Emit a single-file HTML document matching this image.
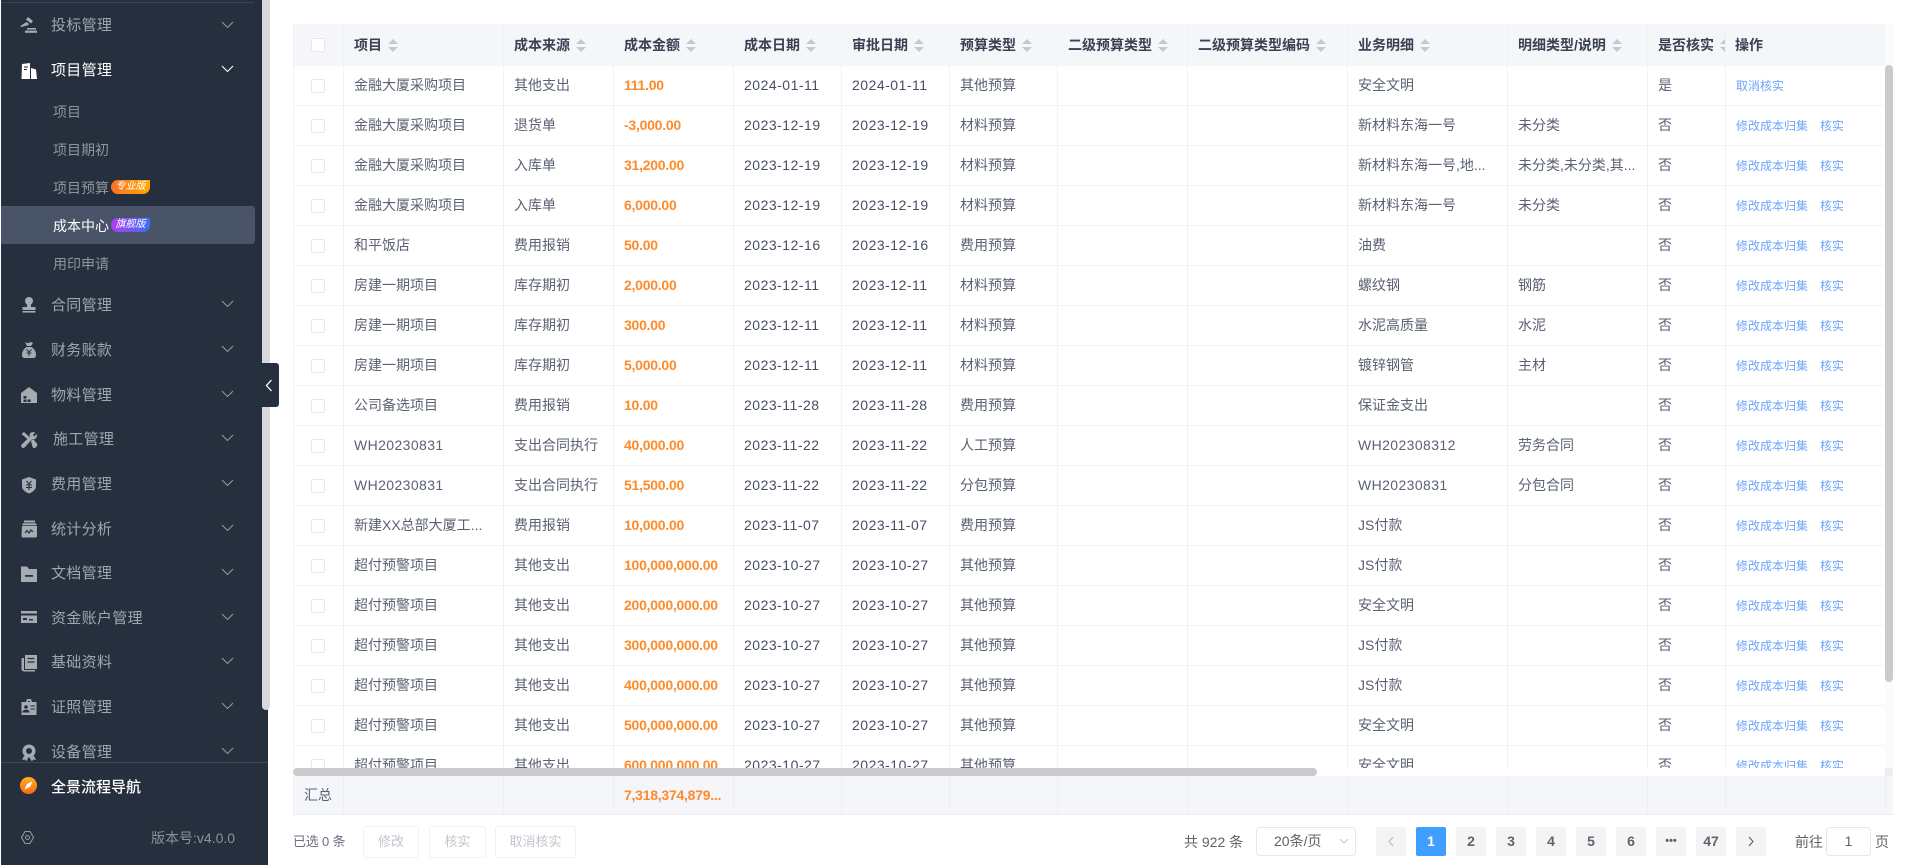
<!DOCTYPE html>
<html lang="zh-CN">
<head>
<meta charset="utf-8">
<title>成本中心</title>
<style>
*{box-sizing:border-box}
html,body{margin:0;padding:0;width:1917px;height:865px;overflow:hidden;background:#fff}
body{position:relative;font-family:"Liberation Sans","Noto Sans CJK SC",sans-serif;font-size:14px;color:#5a6172;filter:blur(.3px)}
.a{position:absolute;white-space:nowrap}
#side{position:absolute;left:1px;top:0;width:267px;height:865px;background:#262f3e}
.sb{position:absolute;left:261px;top:0;width:8px;height:710px;background:#d7d9dc;border-radius:0 0 4px 4px}
.m{position:absolute;left:50px;height:24px;line-height:24px;font-size:15px;letter-spacing:.3px;color:#a0a6ad;white-space:nowrap;margin-top:1px}
.s{position:absolute;left:52px;height:22px;line-height:22px;font-size:14px;color:#8f959e;white-space:nowrap}
.ic{position:absolute;left:19px;width:18px;height:18px;fill:#a5abb0;margin-top:1px}
.ch{position:absolute;left:220px;width:13px;height:8px;fill:none;stroke:#8f959c;stroke-width:1.1}
.bd{position:absolute;left:110px;width:39px;height:14px;line-height:14px;text-align:center;color:#fff;font-size:10px;font-style:italic;border-radius:7px 0 7px 7px}
#t{position:absolute;left:293px;top:24px;width:1592px;height:752px;overflow:hidden}
table{border-collapse:collapse;table-layout:fixed;width:1592px;position:absolute;left:0;top:0}
th,td{height:40px;padding:0 0 0 10px;border-right:1px solid #f1f2f6;border-bottom:1px solid #f2f3f7;text-align:left;white-space:nowrap;overflow:hidden;font-weight:400}
td:first-child,th:first-child{padding:0 2px 0 0;text-align:center;border-left:1px solid #f1f2f6}
th{height:41px;background:#f4f6fa;color:#3a4152;font-weight:700;font-size:14px;padding-top:2px}
td:nth-child(4){color:#ff8a2a;font-weight:700;letter-spacing:-.25px}
td:nth-child(5),td:nth-child(6){color:#464e63;letter-spacing:.5px}
td:nth-child(13){padding-left:10px;font-size:12px;color:#6ea5fb}
th:nth-child(13){padding-left:9px}
.l{letter-spacing:.4px}
td a{margin-right:12px}
.c{display:inline-block;width:14px;height:14px;border:1px solid #e6e8ec;border-radius:2px;background:#fff;vertical-align:middle}
.o{display:inline-block;position:relative;width:10px;height:13px;margin-left:6px;vertical-align:-2px}
.o:before,.o:after{content:"";position:absolute;left:0;border-left:5px solid transparent;border-right:5px solid transparent}
.o:before{top:0;border-bottom:5px solid #c4c8d0}
.o:after{bottom:0;border-top:5px solid #c4c8d0}
#f{position:absolute;left:293px;top:776px;width:1600px;height:39px;background:#f4f6fa;border-bottom:1px solid #eceef3;overflow:hidden}
#f table td{background:#f4f6fa;height:38px;border-bottom:0;border-right:1px solid #edeff4}
#f td:first-child{text-align:left;padding-left:10px}
.b{position:absolute;top:826px;height:32px;line-height:30px;text-align:center;border:1px solid #f1f2f5;border-radius:3px;color:#c2c5cc;font-size:13px}
.p{position:absolute;top:827px;width:30px;height:29px;line-height:29px;text-align:center;background:#f4f4f5;border-radius:2px;color:#5f6470;font-weight:700;font-size:14px}
.p.on{background:#409eff;color:#fff}
</style>
</head>
<body>
<div id="side">
  <div class="a" style="left:0;top:2px;width:253px;height:1px;background:#3a4454"></div>
  <div class="sb"></div>

  <svg class="ic" style="top:15px" viewBox="0 0 18 18"><path d="M8 1l5 4-2 2.500-5-4zM6.500 6l2.500 2-1 1.200-7 1.800-.6-1z"/><rect x="7" y="12" width="9" height="1.600"/><rect x="5" y="14.600" width="12" height="2.200"/></svg>
  <div class="m" style="top:13px">投标管理</div>
  <svg class="ch" style="top:21px" viewBox="0 0 13 8"><path d="M1 1l5.500 5.500L12 1"/></svg>

  <svg class="ic" style="top:61px;fill:#fff" viewBox="0 0 18 18"><path d="M2 2l8-1v16H1.500zM11 6l5 1.500 1 9.500h-6z"/><path d="M4 5h4M4 7.500h3" stroke="#262f3e" stroke-width="1" fill="none"/></svg>
  <div class="m" style="top:58px;color:#fff">项目管理</div>
  <svg class="ch" style="top:65px;stroke:#fff" viewBox="0 0 13 8"><path d="M1 1l5.500 5.500L12 1"/></svg>

  <div class="s" style="top:101px">项目</div>
  <div class="s" style="top:139px">项目期初</div>
  <div class="s" style="top:177px">项目预算</div>
  <div class="bd" style="top:180px;background:linear-gradient(90deg,#fb6f2c,#fdab00)">专业版</div>
  <div class="a" style="left:0;top:206px;width:254px;height:38px;background:#4a5469;border-radius:0 3px 3px 0"></div>
  <div class="s" style="top:215px;color:#fff">成本中心</div>
  <div class="bd" style="top:218px;background:linear-gradient(90deg,#b43cf0,#3a70f6)">旗舰版</div>
  <div class="s" style="top:253px">用印申请</div>

  <svg class="ic" style="top:295px" viewBox="0 0 18 18"><circle cx="9" cy="5" r="4"/><rect x="7" y="8" width="4" height="4"/><rect x="2.500" y="11" width="13" height="3"/><rect x="2.500" y="15" width="13" height="1.600"/></svg>
  <div class="m" style="top:293px">合同管理</div>
  <svg class="ch" style="top:300px" viewBox="0 0 13 8"><path d="M1 1l5.500 5.500L12 1"/></svg>

  <svg class="ic" style="top:340px" viewBox="0 0 18 18"><path d="M5 1l2.500 1.200L11 1l2 1-2 3H7zM6.500 6h5C14.500 8 16 11 16 14c0 2-1 3-3 3H5c-2 0-3-1-3-3 0-3 1.500-6 4.500-8z"/><path d="M6.500 8.500L9 11l2.500-2.500M6.500 12h5M9 11v4" stroke="#262f3e" stroke-width="1" fill="none"/></svg>
  <div class="m" style="top:338px">财务账款</div>
  <svg class="ch" style="top:345px" viewBox="0 0 13 8"><path d="M1 1l5.500 5.500L12 1"/></svg>

  <svg class="ic" style="top:385px" viewBox="0 0 18 18"><path d="M9 1l8 6v10H1V7z"/><path d="M3.500 10h3v2.500h-3zM3.500 13.500h3V16h-3zM7.500 13.500h3V16h-3z" fill="#262f3e"/></svg>
  <div class="m" style="top:383px">物料管理</div>
  <svg class="ch" style="top:390px" viewBox="0 0 13 8"><path d="M1 1l5.500 5.500L12 1"/></svg>

  <svg class="ic" style="top:430px" viewBox="0 0 18 18"><path d="M1.500 3L4 1l5.500 5-2 2.200zM11 10l2-2 4 4.500c.5 1 .5 2-.3 3l-1 1c-1 .8-2 .7-3 0z"/><path d="M11 1.500c2.500-1 4 0 4.200.2l-2.400 2.300 1.400 1.400 2.400-2.400c.6 1.500.3 3.200-.7 4.200-1 1-2.400 1.300-3.600.8L4.800 16.300c-.9.9-2.200.9-3 .1-.9-.9-.9-2.200 0-3.100l8-7.500c-.5-1.500-.1-3.500 1.200-4.300z"/></svg>
  <div class="m" style="top:427px;left:52px">施工管理</div>
  <svg class="ch" style="top:434px" viewBox="0 0 13 8"><path d="M1 1l5.500 5.500L12 1"/></svg>

  <svg class="ic" style="top:475px" viewBox="0 0 18 18"><path d="M9 1l7 2.500V10c0 3.500-3 6-7 7.500C5 16 2 13.500 2 10V3.500z"/><path d="M6.500 5L9 8l2.500-3M6 9h6M6 11.500h6M9 8v6" stroke="#262f3e" stroke-width="1.100" fill="none"/></svg>
  <div class="m" style="top:472px">费用管理</div>
  <svg class="ch" style="top:479px" viewBox="0 0 13 8"><path d="M1 1l5.500 5.500L12 1"/></svg>

  <svg class="ic" style="top:519px" viewBox="0 0 18 18"><rect x="4" y="0.500" width="11" height="2"/><rect x="2.500" y="3.300" width="14" height="2"/><path d="M2 6h15v10a1.500 1.500 0 0 1-1.500 1.500h-12A1.500 1.500 0 0 1 1.500 16z"/><path d="M5 13l2-2.500 2 2.500 2-3 2 2" stroke="#262f3e" stroke-width="1.200" fill="none"/></svg>
  <div class="m" style="top:517px">统计分析</div>
  <svg class="ch" style="top:524px" viewBox="0 0 13 8"><path d="M1 1l5.500 5.500L12 1"/></svg>

  <svg class="ic" style="top:564px" viewBox="0 0 18 18"><path d="M1 1.500h6l2 2.500h8v13H1z"/><rect x="5" y="10" width="8" height="1.800" fill="#262f3e"/></svg>
  <div class="m" style="top:561px">文档管理</div>
  <svg class="ch" style="top:568px" viewBox="0 0 13 8"><path d="M1 1l5.500 5.500L12 1"/></svg>

  <svg class="ic" style="top:607px" viewBox="0 0 18 18"><rect x="1" y="3" width="16" height="12"/><rect x="1" y="5.500" width="16" height="2" fill="#262f3e"/><rect x="3" y="10" width="4" height="2" fill="#262f3e"/><rect x="9" y="11" width="4" height="1.500" fill="#262f3e"/></svg>
  <div class="m" style="top:606px">资金账户管理</div>
  <svg class="ch" style="top:613px" viewBox="0 0 13 8"><path d="M1 1l5.500 5.500L12 1"/></svg>

  <svg class="ic" style="top:653px" viewBox="0 0 18 18"><path d="M2 4h2v12h11v1.500H4a2.500 2.500 0 0 1-2.500-2.500V5z"/><path d="M5 1h12v14H5z"/><path d="M7.500 4.500h7M7.500 8h7" stroke="#262f3e" stroke-width="1.300" fill="none"/></svg>
  <div class="m" style="top:650px">基础资料</div>
  <svg class="ch" style="top:657px" viewBox="0 0 13 8"><path d="M1 1l5.500 5.500L12 1"/></svg>

  <svg class="ic" style="top:697px" viewBox="0 0 18 18"><path d="M7 1h4l1 3h4.500v13h-15V4H6z"/><circle cx="6" cy="9" r="1.800" fill="#262f3e"/><path d="M3 14c.5-2.500 5.500-2.500 6 0zM10.500 8h4.500M10.500 11h4.500M8 3.500h2" stroke="#262f3e" stroke-width="1" fill="#262f3e"/></svg>
  <div class="m" style="top:695px">证照管理</div>
  <svg class="ch" style="top:702px" viewBox="0 0 13 8"><path d="M1 1l5.500 5.500L12 1"/></svg>

  <svg class="ic" style="top:743px" viewBox="0 0 18 18"><circle cx="9" cy="7" r="6.500"/><circle cx="9" cy="7" r="3" fill="#262f3e"/><path d="M4 12l-2 4 3-.5 1 2 2.500-4zM14 12l2 4-3-.5-1 2-2.500-4z"/></svg>
  <div class="m" style="top:740px">设备管理</div>
  <svg class="ch" style="top:747px" viewBox="0 0 13 8"><path d="M1 1l5.500 5.500L12 1"/></svg>

  <div class="a" style="left:0;top:762px;width:267px;height:103px;background:#262f3e;border-top:1px solid #3d4757"></div>
  <svg class="a" style="left:19px;top:777px;width:17px;height:17px" viewBox="0 0 17 17"><defs><linearGradient id="g" x1="0" y1="0" x2="0" y2="1"><stop offset="0" stop-color="#ffb020"/><stop offset="1" stop-color="#f56a10"/></linearGradient></defs><circle cx="8.500" cy="8.500" r="8.500" fill="url(#g)"/><path d="M12.500 4.500L7 7l-2.500 5.500L10 10z" fill="#fff"/></svg>
  <div class="a" style="left:50px;top:776px;height:24px;line-height:24px;font-size:15px;font-weight:500;color:#fff">全景流程导航</div>
  <svg class="a" style="left:19px;top:830px;width:15px;height:15px" viewBox="0 0 15 15" fill="none" stroke="#9198a0" stroke-width="1.100"><path d="M5 1.500h5l3.500 6-3.500 6H5l-3.500-6z"/><circle cx="7.500" cy="7.500" r="2"/></svg>
  <div class="a" style="left:150px;top:827px;height:22px;line-height:22px;font-size:14px;color:#8c9299">版本号:v4.0.0</div>
</div>

<div class="a" style="left:262px;top:363px;width:17px;height:44px;background:#262f3e;border-radius:0 3px 3px 0"></div>
<svg class="a" style="left:265px;top:379px;width:8px;height:13px" viewBox="0 0 8 13" fill="none" stroke="#fff" stroke-width="1.300"><path d="M6.500 1L1.500 6.500l5 5.500"/></svg>

<div id="t">
<table>
<colgroup><col style="width:50px"><col style="width:160px"><col style="width:110px"><col style="width:120px"><col style="width:108px"><col style="width:108px"><col style="width:108px"><col style="width:130px"><col style="width:160px"><col style="width:160px"><col style="width:140px"><col style="width:78px"><col style="width:160px"></colgroup>
<thead><tr><th><i class="c"></i></th><th>项目<i class="o"></i></th><th>成本来源<i class="o"></i></th><th>成本金额<i class="o"></i></th><th>成本日期<i class="o"></i></th><th>审批日期<i class="o"></i></th><th>预算类型<i class="o"></i></th><th>二级预算类型<i class="o"></i></th><th>二级预算类型编码<i class="o"></i></th><th>业务明细<i class="o"></i></th><th>明细类型/说明<i class="o"></i></th><th>是否核实<i class="o"></i></th><th>操作</th></tr></thead>
<tbody>
<tr><td><i class="c"></i></td><td>金融大厦采购项目</td><td>其他支出</td><td>111.00</td><td>2024-01-11</td><td>2024-01-11</td><td>其他预算</td><td></td><td></td><td>安全文明</td><td></td><td>是</td><td><a>取消核实</a></td></tr>
<tr><td><i class="c"></i></td><td>金融大厦采购项目</td><td>退货单</td><td>-3,000.00</td><td>2023-12-19</td><td>2023-12-19</td><td>材料预算</td><td></td><td></td><td>新材料东海一号</td><td>未分类</td><td>否</td><td><a>修改成本归集</a><a>核实</a></td></tr>
<tr><td><i class="c"></i></td><td>金融大厦采购项目</td><td>入库单</td><td>31,200.00</td><td>2023-12-19</td><td>2023-12-19</td><td>材料预算</td><td></td><td></td><td>新材料东海一号,地...</td><td>未分类,未分类,其...</td><td>否</td><td><a>修改成本归集</a><a>核实</a></td></tr>
<tr><td><i class="c"></i></td><td>金融大厦采购项目</td><td>入库单</td><td>6,000.00</td><td>2023-12-19</td><td>2023-12-19</td><td>材料预算</td><td></td><td></td><td>新材料东海一号</td><td>未分类</td><td>否</td><td><a>修改成本归集</a><a>核实</a></td></tr>
<tr><td><i class="c"></i></td><td>和平饭店</td><td>费用报销</td><td>50.00</td><td>2023-12-16</td><td>2023-12-16</td><td>费用预算</td><td></td><td></td><td>油费</td><td></td><td>否</td><td><a>修改成本归集</a><a>核实</a></td></tr>
<tr><td><i class="c"></i></td><td>房建一期项目</td><td>库存期初</td><td>2,000.00</td><td>2023-12-11</td><td>2023-12-11</td><td>材料预算</td><td></td><td></td><td>螺纹钢</td><td>钢筋</td><td>否</td><td><a>修改成本归集</a><a>核实</a></td></tr>
<tr><td><i class="c"></i></td><td>房建一期项目</td><td>库存期初</td><td>300.00</td><td>2023-12-11</td><td>2023-12-11</td><td>材料预算</td><td></td><td></td><td>水泥高质量</td><td>水泥</td><td>否</td><td><a>修改成本归集</a><a>核实</a></td></tr>
<tr><td><i class="c"></i></td><td>房建一期项目</td><td>库存期初</td><td>5,000.00</td><td>2023-12-11</td><td>2023-12-11</td><td>材料预算</td><td></td><td></td><td>镀锌钢管</td><td>主材</td><td>否</td><td><a>修改成本归集</a><a>核实</a></td></tr>
<tr><td><i class="c"></i></td><td>公司备选项目</td><td>费用报销</td><td>10.00</td><td>2023-11-28</td><td>2023-11-28</td><td>费用预算</td><td></td><td></td><td>保证金支出</td><td></td><td>否</td><td><a>修改成本归集</a><a>核实</a></td></tr>
<tr><td><i class="c"></i></td><td class="l">WH20230831</td><td>支出合同执行</td><td>40,000.00</td><td>2023-11-22</td><td>2023-11-22</td><td>人工预算</td><td></td><td></td><td class="l">WH202308312</td><td>劳务合同</td><td>否</td><td><a>修改成本归集</a><a>核实</a></td></tr>
<tr><td><i class="c"></i></td><td class="l">WH20230831</td><td>支出合同执行</td><td>51,500.00</td><td>2023-11-22</td><td>2023-11-22</td><td>分包预算</td><td></td><td></td><td class="l">WH20230831</td><td>分包合同</td><td>否</td><td><a>修改成本归集</a><a>核实</a></td></tr>
<tr><td><i class="c"></i></td><td>新建XX总部大厦工...</td><td>费用报销</td><td>10,000.00</td><td>2023-11-07</td><td>2023-11-07</td><td>费用预算</td><td></td><td></td><td>JS付款</td><td></td><td>否</td><td><a>修改成本归集</a><a>核实</a></td></tr>
<tr><td><i class="c"></i></td><td>超付预警项目</td><td>其他支出</td><td>100,000,000.00</td><td>2023-10-27</td><td>2023-10-27</td><td>其他预算</td><td></td><td></td><td>JS付款</td><td></td><td>否</td><td><a>修改成本归集</a><a>核实</a></td></tr>
<tr><td><i class="c"></i></td><td>超付预警项目</td><td>其他支出</td><td>200,000,000.00</td><td>2023-10-27</td><td>2023-10-27</td><td>其他预算</td><td></td><td></td><td>安全文明</td><td></td><td>否</td><td><a>修改成本归集</a><a>核实</a></td></tr>
<tr><td><i class="c"></i></td><td>超付预警项目</td><td>其他支出</td><td>300,000,000.00</td><td>2023-10-27</td><td>2023-10-27</td><td>其他预算</td><td></td><td></td><td>JS付款</td><td></td><td>否</td><td><a>修改成本归集</a><a>核实</a></td></tr>
<tr><td><i class="c"></i></td><td>超付预警项目</td><td>其他支出</td><td>400,000,000.00</td><td>2023-10-27</td><td>2023-10-27</td><td>其他预算</td><td></td><td></td><td>JS付款</td><td></td><td>否</td><td><a>修改成本归集</a><a>核实</a></td></tr>
<tr><td><i class="c"></i></td><td>超付预警项目</td><td>其他支出</td><td>500,000,000.00</td><td>2023-10-27</td><td>2023-10-27</td><td>其他预算</td><td></td><td></td><td>安全文明</td><td></td><td>否</td><td><a>修改成本归集</a><a>核实</a></td></tr>
<tr><td><i class="c"></i></td><td>超付预警项目</td><td>其他支出</td><td>600,000,000.00</td><td>2023-10-27</td><td>2023-10-27</td><td>其他预算</td><td></td><td></td><td>安全文明</td><td></td><td>否</td><td><a>修改成本归集</a><a>核实</a></td></tr>
</tbody>
</table>
<div class="a" style="left:0;top:744px;width:1592px;height:8px;background:#fff"></div>
<div class="a" style="left:0;top:744px;width:1024px;height:8px;background:#cbcbcb;border-radius:4px"></div>
</div>

<div class="a" style="left:1885px;top:24px;width:8px;height:791px;background:#fafbfc"></div>
<div class="a" style="left:1885px;top:65px;width:8px;height:617px;background:#cbcbcb;border-radius:4px"></div>
<div class="a" style="left:1885px;top:768px;width:8px;height:8px;background:#eeeeee"></div>

<div id="f">
<table>
<colgroup><col style="width:50px"><col style="width:160px"><col style="width:110px"><col style="width:120px"><col style="width:108px"><col style="width:108px"><col style="width:108px"><col style="width:130px"><col style="width:160px"><col style="width:160px"><col style="width:140px"><col style="width:78px"><col style="width:160px"></colgroup>
<tr><td>汇总</td><td></td><td></td><td>7,318,374,879...</td><td></td><td></td><td></td><td></td><td></td><td></td><td></td><td></td><td></td></tr>
</table>
</div>

<div class="a" style="left:293px;top:831px;line-height:22px;font-size:13px;letter-spacing:-.2px;color:#6a7080">已选 0 条</div>
<div class="b" style="left:363px;width:56px">修改</div>
<div class="b" style="left:429px;width:57px">核实</div>
<div class="b" style="left:495px;width:81px">取消核实</div>

<div class="a" style="left:1184px;top:831px;line-height:22px;font-size:14px;color:#606266">共 922 条</div>
<div class="a" style="left:1256px;top:827px;width:100px;height:29px;line-height:27px;border:1px solid #e4e7ed;border-radius:4px;padding-left:17px;color:#606266;font-size:14px">20条/页</div>
<svg class="a" style="left:1339px;top:838px;width:10px;height:7px" viewBox="0 0 10 7" fill="none" stroke="#c0c4cc" stroke-width="1"><path d="M1 1l4 4 4-4"/></svg>
<div class="p" style="left:1376px"></div>
<svg class="a" style="left:1387px;top:836px;width:8px;height:11px" viewBox="0 0 8 11" fill="none" stroke="#b8bcc4" stroke-width="1.200"><path d="M6 1L2 5.500 6 10"/></svg>
<div class="p on" style="left:1416px">1</div>
<div class="p" style="left:1456px">2</div>
<div class="p" style="left:1496px">3</div>
<div class="p" style="left:1536px">4</div>
<div class="p" style="left:1576px">5</div>
<div class="p" style="left:1616px">6</div>
<div class="p" style="left:1656px;font-size:11px">•••</div>
<div class="p" style="left:1696px">47</div>
<div class="p" style="left:1736px"></div>
<svg class="a" style="left:1747px;top:836px;width:8px;height:11px" viewBox="0 0 8 11" fill="none" stroke="#606266" stroke-width="1.200"><path d="M2 1l4 4.500L2 10"/></svg>
<div class="a" style="left:1795px;top:831px;line-height:22px;color:#606266">前往</div>
<div class="a" style="left:1826px;top:827px;width:45px;height:29px;line-height:27px;text-align:center;border:1px solid #e4e7ed;border-radius:4px;color:#606266">1</div>
<div class="a" style="left:1875px;top:831px;line-height:22px;color:#606266">页</div>
</body>
</html>
